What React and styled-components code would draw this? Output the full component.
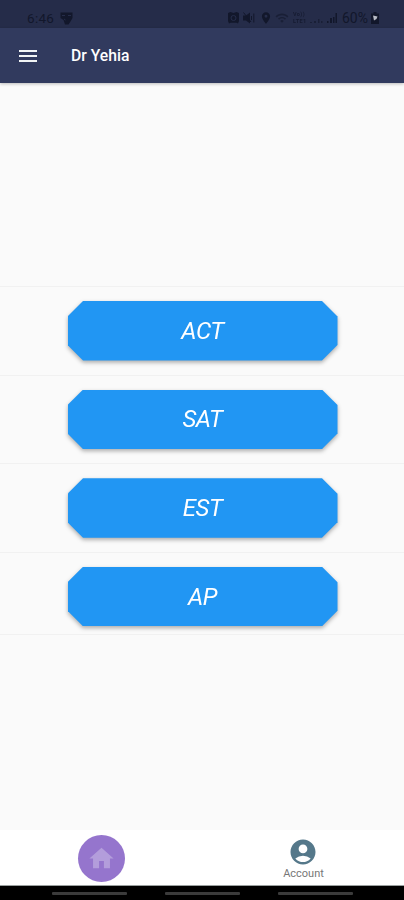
import React from "react";
import styled, { createGlobalStyle } from "styled-components";
import {
  MdMenu,
  MdHome,
  MdAccountCircle,
  MdLocationOn,
  MdWifi,
} from "react-icons/md";

const courses = ["ACT", "SAT", "EST", "AP"];

const App = () => {
  return (
    <Screen>
      <GlobalStyle />
      <StatusBar>
        <Clock>6:46</Clock>
        <svg className="mask" width="13" height="13" viewBox="0 0 13 13">
          <path d="M0.5 0.5H12.5V6L10.5 9.5L8.5 12.5H5L3.5 8L0.5 6Z" />
          <path className="cut" d="M2 3.5H5M8 3.5H11M4 7L5.5 8" />
        </svg>
        <StatusIcons>
          <svg width="11" height="12" viewBox="0 0 11 12">
            <path d="M0 1L2.5 0L5.5 1L8.5 0L11 1V9L10 11.5L8.5 10.8H2.5L1 11.5L0 9z" />
            <circle className="cut" cx="5.5" cy="6" r="2.5" />
          </svg>
          <svg width="12" height="12" viewBox="0 0 12 12">
            <path d="M0 3.5h3L7 0.5v11L3 8.5H0z" />
            <path className="wave" d="M0.5 0.5L8 10M8.5 4v4M10.8 1.5v9" />
          </svg>
          <MdLocationOn className="pin" size={14} />
          <MdWifi className="faint" size={14} />
          <Network>
            <span>Vo))</span>
            <span>LTE1</span>
          </Network>
          <svg className="faint" width="14" height="10" viewBox="0 0 14 10">
            <path d="M0 9h2v1H0zM4 8h2v2H4zM8 6h1.5v4H8zM11 8h1.5v2H11z" />
          </svg>
          <svg className="signal" width="11" height="10" viewBox="0 0 11 10">
            <path d="M0 8h1.5v2H0zM3 5h2v5H3zM6 4h1.5v6H6zM8.5 0h1.5v10H8.5z" />
          </svg>
          <Percent>60%</Percent>
          <svg width="8" height="12" viewBox="0 0 8 12">
            <path d="M2.5 0h3v1.5H8V12H0V1.5h2.5z" />
            <path fill="#b9bcc6" d="M2 3.5L6.5 4.5L5.5 7L3 8.5z" />
          </svg>
        </StatusIcons>
      </StatusBar>

      <AppBar>
        <MenuButton aria-label="menu">
          <MdMenu size={24} />
        </MenuButton>
        <h1>Dr Yehia</h1>
      </AppBar>

      <Main>
        {courses.map((course) => (
          <Row key={course}>
            <ButtonShadow>
              <CourseButton>{course}</CourseButton>
            </ButtonShadow>
          </Row>
        ))}
      </Main>

      <BottomNav>
        <NavItem>
          <HomeCircle aria-label="home">
            <MdHome size={29} />
          </HomeCircle>
        </NavItem>
        <NavItem>
          <Account>
            <MdAccountCircle size={30} />
            <span>Account</span>
          </Account>
        </NavItem>
      </BottomNav>

      <SystemBar>
        <Handle />
        <Handle />
        <Handle />
      </SystemBar>
    </Screen>
  );
};

export default App;

const GlobalStyle = createGlobalStyle`
  * {
    box-sizing: border-box;
  }

  body {
    margin: 0;
    font-family: Roboto, "Liberation Sans", sans-serif;
  }
`;

const Screen = styled.div`
  display: flex;
  flex-direction: column;
  width: 404px;
  height: 900px;
  overflow: hidden;
  background: #fafafa;
`;

const StatusBar = styled.div`
  display: flex;
  align-items: center;
  height: 28px;
  padding: 8px 25px 0 27px;
  background: #252c49;
  color: #12172b;

  svg {
    display: block;
    flex-shrink: 0;
    fill: currentColor;
  }

  .mask {
    margin-left: 5px;
  }

  .cut {
    stroke: #252c49;
    fill: none;
  }

  .wave {
    stroke: currentColor;
    fill: none;
  }
`;

const Clock = styled.span`
  width: 28px;
  font-size: 13.5px;
  letter-spacing: 0.3px;
  line-height: 16px;
`;

const StatusIcons = styled.div`
  display: flex;
  align-items: center;
  margin-left: auto;
  gap: 4px;

  .pin {
    margin-right: -2px;
  }

  .faint {
    opacity: 0.6;
  }

  .signal {
    margin-left: -1px;
  }
`;

const Network = styled.div`
  display: flex;
  flex-direction: column;
  width: 16px;
  margin-right: -3px;
  font-size: 5.5px;
  font-weight: 700;
  letter-spacing: 0.4px;
  line-height: 7px;
  opacity: 0.8;
`;

const Percent = styled.span`
  width: 26px;
  margin-right: -1px;
  font-size: 14px;
  line-height: 16px;
`;

const AppBar = styled.header`
  display: flex;
  align-items: center;
  height: 55px;
  padding-left: 16px;
  background: #313a5e;
  color: #fff;
  box-shadow: 0 1px 3px rgba(0, 0, 0, 0.25);

  h1 {
    margin: 0 0 0 31px;
    font-size: 15.7px;
    font-weight: 500;
    line-height: 20px;
  }
`;

const MenuButton = styled.button`
  display: flex;
  padding: 0;
  border: none;
  background: none;
  color: #f1f4f5;
`;

const Main = styled.main`
  flex: 1;
  padding-top: 203px;
`;

const Row = styled.div`
  display: flex;
  justify-content: center;
  height: 88.6px;
  padding: 14px 0 0 1px;
  border-top: 1px solid #f1f1f1;

  &:last-child {
    height: 83px;
    border-bottom: 1px solid #f1f1f1;
  }
`;

const ButtonShadow = styled.div`
  height: 60px;
  filter: drop-shadow(0 2px 2px rgba(0, 0, 0, 0.32));
`;

const CourseButton = styled.button`
  display: block;
  width: 270px;
  height: 59.5px;
  padding: 0;
  border: none;
  background: #2196f3;
  color: #fff;
  font-family: inherit;
  font-size: 24px;
  font-style: italic;
  letter-spacing: -0.4px;
  /* bevelled corners */
  clip-path: polygon(
    15.5px 0,
    calc(100% - 15.5px) 0,
    100% 15.5px,
    100% calc(100% - 15.5px),
    calc(100% - 15.5px) 100%,
    15.5px 100%,
    0 calc(100% - 15.5px),
    0 15.5px
  );
`;

const BottomNav = styled.nav`
  display: flex;
  height: 56px;
  background: #fff;
  border-bottom: 1px solid #9aa09f;
`;

const NavItem = styled.div`
  display: flex;
  flex: 1;
  align-items: center;
  justify-content: center;
`;

const HomeCircle = styled.button`
  display: flex;
  align-items: center;
  justify-content: center;
  width: 47px;
  height: 47px;
  margin: 1px 0 0 1px;
  padding: 0;
  border: none;
  border-radius: 50%;
  background: #9575cd;
  color: #b39ddb;
`;

const Account = styled.div`
  display: flex;
  flex-direction: column;
  align-items: center;
  padding: 1px 0 0 1px;
  color: #55788a;

  span {
    color: #777;
    font-size: 11px;
    line-height: 13px;
  }
`;

const SystemBar = styled.div`
  display: flex;
  justify-content: center;
  gap: 38px;
  height: 14px;
  padding-top: 6px;
  background: #000;
`;

const Handle = styled.span`
  width: 75px;
  height: 3px;
  border-radius: 1px;
  background: #3b3b3b;
`;
